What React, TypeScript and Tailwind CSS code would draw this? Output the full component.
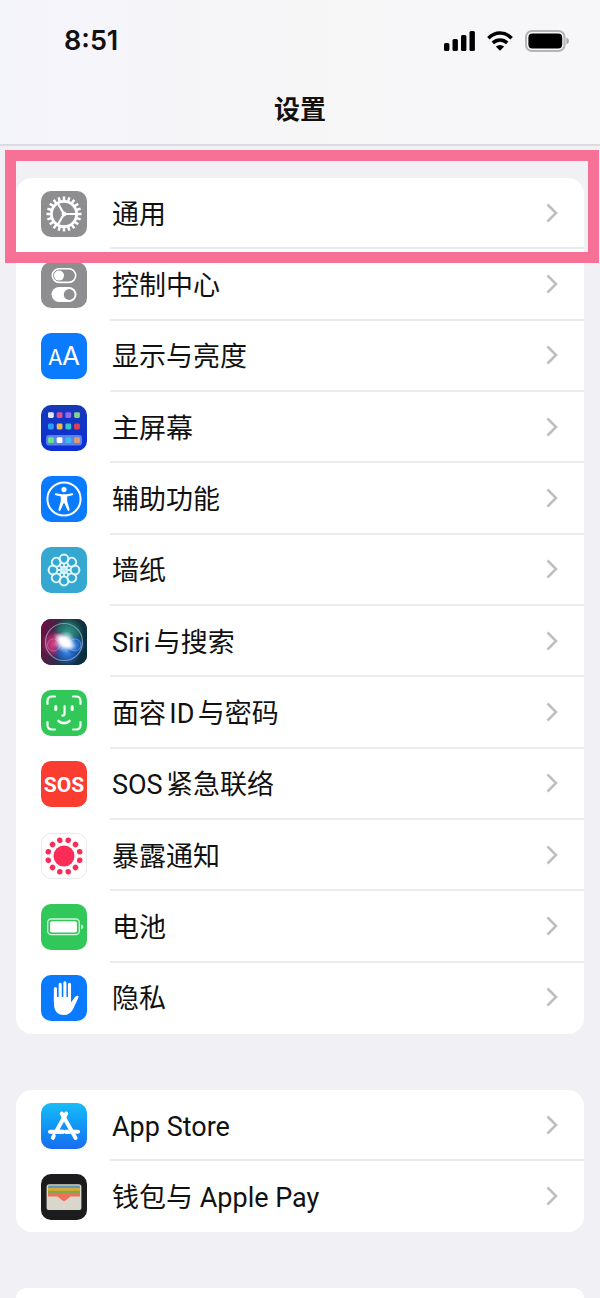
import React from 'react';

interface SettingItem {
  label: string;
  icon: React.ReactNode;
  highlighted?: boolean;
}

const spin = (count: number, offset = 0) =>
  Array.from({ length: count }, (_, i) => offset + (i * 360) / count);

const Tile = ({ className, children }: { className: string; children: React.ReactNode }) => (
  <span className={`block size-[46px] shrink-0 overflow-hidden rounded-[10px] ${className}`}>
    <svg viewBox="0 0 46 46" className="size-full" fill="none" aria-hidden="true">
      {children}
    </svg>
  </span>
);

const GearIcon = () => (
  <Tile className="bg-[#8e8e90]">
    <g stroke="#fff">
      <circle cx="23" cy="23" r="12.6" strokeWidth="2.8" />
      {spin(20).map((a) => (
        <path key={a} d="M36 23H40.5" strokeWidth="2.5" transform={`rotate(${a} 23 23)`} />
      ))}
      {spin(3).map((a) => (
        <path key={a} d="M23 23H36" strokeWidth="2.2" transform={`rotate(${a} 23 23)`} />
      ))}
    </g>
    <circle cx="23" cy="23" r="2.4" fill="#fff" />
  </Tile>
);

const ControlIcon = () => (
  <Tile className="bg-[#8e8e90]">
    <rect x="11.3" y="6.8" width="23.4" height="13.6" rx="6.8" stroke="#fff" strokeWidth="1.6" />
    <circle cx="18" cy="13.6" r="5" fill="#fff" />
    <rect x="10.5" y="25" width="25" height="15" rx="7.5" fill="#fff" />
    <circle cx="28.2" cy="32.5" r="5.4" fill="#8e8e90" />
  </Tile>
);

const DisplayIcon = () => (
  <Tile className="bg-[#0a7aff]">
    <g fill="#fff" className="font-['Inter']">
      <text x="7" y="32" fontSize="21">A</text>
      <text x="21" y="32" fontSize="26">A</text>
    </g>
  </Tile>
);

const homeColors = [
  ['#e3e6fa', '#e0508c', '#9268f0', '#86cf8c'],
  ['#2f9df5', '#f2b84a', '#3cc3c4', '#dd3f52'],
  ['#6be08c', '#ffffff', '#36bdf2', '#e09a72'],
];

const HomeIcon = () => (
  <Tile className="bg-linear-to-b from-[#1638b8] to-[#0a2fd8]">
    <rect x="5" y="30" width="36" height="10.5" rx="3" fill="#5b82ea" />
    {homeColors.map((row, r) =>
      row.map((color, c) => (
        <rect key={`${r}${c}`} x={7 + c * 8.7} y={[7.2, 18.6, 32.3][r]} width="5.8" height="5.8" rx="1.4" fill={color} />
      ))
    )}
  </Tile>
);

const AccessibilityIcon = () => (
  <Tile className="bg-[#0a7aff]">
    <circle cx="23" cy="23" r="16.6" stroke="#fff" strokeWidth="2" />
    <circle cx="23" cy="13.6" r="2.6" fill="#fff" />
    <path
      d="M14.8 17.2 21 18.2Q23 18.5 25 18.2L31.2 17.2Q32.4 17.4 32.2 18.4 32.1 19 31.2 19.3L26.2 20.6V25.2L28.6 33.6Q28.6 35 27.6 35 26.8 35 26.4 34L23.4 27.2H22.6L19.6 34Q19.2 35 18.4 35 17.4 35 17.4 33.6L19.8 25.2V20.6L14.8 19.3Q13.9 19 13.8 18.4 13.6 17.4 14.8 17.2Z"
      fill="#fff"
    />
  </Tile>
);

const WallpaperIcon = () => (
  <Tile className="bg-[#35a8d2]">
    <g stroke="#e4f8ff">
      {spin(8).map((a) => (
        <g key={a} transform={`rotate(${a} 23 23)`}>
          <circle cx="23" cy="12" r="4.4" strokeWidth="2" />
          <path d="M23 19.8V16.5" strokeWidth="1.8" />
        </g>
      ))}
      <circle cx="23" cy="23" r="3.2" fill="#bfeaf8" strokeWidth="1.4" />
    </g>
  </Tile>
);

const SiriIcon = () => (
  <Tile className="bg-[#1b1430]">
    <defs>
      <linearGradient id="siriBack" x1="0" y1="0.4" x2="1" y2="0.6">
        <stop offset="0" stopColor="#6a1244" />
        <stop offset="0.5" stopColor="#25304a" />
        <stop offset="1" stopColor="#06303c" />
      </linearGradient>
      <radialGradient id="siriPink">
        <stop offset="0" stopColor="#e04a90" />
        <stop offset="0.6" stopColor="#b02a6c" stopOpacity="0.8" />
        <stop offset="1" stopColor="#a01860" stopOpacity="0" />
      </radialGradient>
      <radialGradient id="siriGreen">
        <stop offset="0" stopColor="#3a9c90" />
        <stop offset="0.6" stopColor="#1f7c70" stopOpacity="0.8" />
        <stop offset="1" stopColor="#0f6a58" stopOpacity="0" />
      </radialGradient>
      <radialGradient id="siriBlue">
        <stop offset="0" stopColor="#3b8fee" />
        <stop offset="0.6" stopColor="#205fc0" stopOpacity="0.8" />
        <stop offset="1" stopColor="#1550b8" stopOpacity="0" />
      </radialGradient>
      <radialGradient id="siriGlow">
        <stop offset="0" stopColor="#fff" />
        <stop offset="0.4" stopColor="#fff" stopOpacity="0.85" />
        <stop offset="1" stopColor="#d8e8ff" stopOpacity="0" />
      </radialGradient>
    </defs>
    <rect width="46" height="46" fill="url(#siriBack)" />
    <circle cx="27" cy="14" r="16" fill="url(#siriGreen)" />
    <circle cx="14" cy="25" r="14" fill="url(#siriPink)" />
    <circle cx="26" cy="33" r="14" fill="url(#siriBlue)" />
    <circle cx="34" cy="26" r="10" fill="url(#siriBlue)" />
    <circle cx="12.5" cy="26" r="6" stroke="#f08ab8" strokeOpacity="0.5" />
    <circle cx="34" cy="26" r="6" stroke="#8fc8ff" strokeOpacity="0.5" />
    <circle cx="24" cy="23" r="11" fill="url(#siriGlow)" />
    <ellipse cx="24" cy="23" rx="14" ry="6" fill="url(#siriGlow)" transform="rotate(35 24 23)" />
    <circle cx="23" cy="23" r="18.5" stroke="#a3b4c8" strokeOpacity="0.7" strokeWidth="1.2" />
  </Tile>
);

const FaceIdIcon = () => (
  <Tile className="bg-[#32c759]">
    <g stroke="#f2fff4" strokeWidth="2.2" strokeLinecap="round">
      <path d="M6.5 14V11Q6.5 6.5 11 6.5H14M32 6.5H35Q39.5 6.5 39.5 11V14M39.5 32V35Q39.5 39.5 35 39.5H32M14 39.5H11Q6.5 39.5 6.5 35V32" />
      <path d="M14.8 16.5V19.5M31.2 16.5V19.5" strokeWidth="3" />
      <path d="M23.6 16V23.5Q23.6 25.6 21.3 25.6" />
      <path d="M17.5 31Q23 35.4 28.5 31" strokeWidth="2.6" />
    </g>
  </Tile>
);

const SosIcon = () => (
  <Tile className="bg-[#fb3c30]">
    <text x="23" y="31" textAnchor="middle" fontSize="21" fontWeight="700" fill="#fff" className="font-['Roboto']">
      SOS
    </text>
  </Tile>
);

const ExposureIcon = () => (
  <Tile className="border border-[#e9e9ec] bg-white">
    <g fill="#fb2c57">
      <circle cx="23" cy="23" r="11" />
      {spin(12, 15).map((a) => (
        <circle key={a} cx="40" cy="23" r="2.9" transform={`rotate(${a} 23 23)`} />
      ))}
    </g>
  </Tile>
);

const BatteryIcon = () => (
  <Tile className="bg-[#32c759]">
    <rect x="6.7" y="15" width="31.6" height="15.6" rx="3.6" stroke="#d5f6dc" strokeWidth="1.3" />
    <rect x="9" y="17.2" width="27" height="11.2" rx="2" fill="#fff" />
    <path d="M40 20.4Q42.4 21 42.4 22.8 42.4 24.6 40 25.2Z" fill="#d5f6dc" />
  </Tile>
);

const PrivacyIcon = () => (
  <Tile className="bg-[#0a7aff]">
    <path d="M14.4 13.5V26M19.2 9.2V24M23.9 7.9V24M28.5 9.4V25" stroke="#fff" strokeWidth="3.1" strokeLinecap="round" />
    <path
      d="M12.9 22H30V27.6L33.6 22.4Q35.2 20.2 37 20.8 38 21.3 37.2 23L32.4 33.4Q29.4 40 22.8 40 12.9 40 12.9 28Z"
      fill="#fff"
    />
  </Tile>
);

const AppStoreIcon = () => (
  <Tile className="bg-linear-to-b from-[#1bbcf8] to-[#1a6cf0]">
    <g stroke="#fff" strokeWidth="4" strokeLinecap="round">
      <path d="M9 28.8H22M32 28.8H37" />
      <path d="M25.2 10.6 15 28.8H22M12.8 32.8 11.8 34.8" />
      <path d="M20.8 10.6 34.6 35" />
    </g>
    <path d="M24 26.8H27.6L30 31H24Z" fill="#fff" />
  </Tile>
);

const WalletIcon = () => (
  <Tile className="bg-[#1c1c1e]">
    <rect x="5.6" y="10.2" width="34.8" height="25.8" rx="2.6" fill="#d9d7cb" />
    <rect x="7" y="11.6" width="32" height="3" rx="1" fill="#5b9bc0" />
    <rect x="7" y="14" width="32" height="3.6" fill="#d9ab35" />
    <rect x="7" y="16.8" width="32" height="4" fill="#83a84c" />
    <path d="M7 20H39V22.6H29.5L24.6 26.4Q23 27.6 21.4 26.4L16.5 22.6H7Z" fill="#f0705a" />
  </Tile>
);

const mainItems: SettingItem[] = [
  { label: '通用', icon: <GearIcon />, highlighted: true },
  { label: '控制中心', icon: <ControlIcon /> },
  { label: '显示与亮度', icon: <DisplayIcon /> },
  { label: '主屏幕', icon: <HomeIcon /> },
  { label: '辅助功能', icon: <AccessibilityIcon /> },
  { label: '墙纸', icon: <WallpaperIcon /> },
  { label: 'Siri与搜索', icon: <SiriIcon /> },
  { label: '面容ID与密码', icon: <FaceIdIcon /> },
  { label: 'SOS紧急联络', icon: <SosIcon /> },
  { label: '暴露通知', icon: <ExposureIcon /> },
  { label: '电池', icon: <BatteryIcon /> },
  { label: '隐私', icon: <PrivacyIcon /> },
];

const storeItems: SettingItem[] = [
  { label: 'App Store', icon: <AppStoreIcon /> },
  { label: '钱包与 Apple Pay', icon: <WalletIcon /> },
];

const SettingRow = ({ item }: { item: SettingItem }) => (
  <li className="group relative flex min-h-[71px] flex-1">
    <a href="#" className="flex flex-1 items-center pl-[25px]">
      {item.icon}
      <span className="ml-[23px] flex flex-1 items-center justify-between self-stretch border-b-2 border-[#ebebed] pr-[26px] pl-[2px] group-last:border-transparent">
        <span className="pt-1 text-[27px] leading-8 text-[#111]">{item.label}</span>
        <svg width="12" height="20" viewBox="0 0 12 20" fill="none" aria-hidden="true">
          <path d="M1.5 1.5 10 10 1.5 18.5" stroke="#bfbfc2" strokeWidth="2.6" />
        </svg>
      </span>
    </a>
    {item.highlighted && (
      <span className="pointer-events-none absolute -top-7 -right-[15px] -bottom-[14px] -left-[11px] z-10 border-[11px] border-[#f77096]" />
    )}
  </li>
);

const StatusBar = () => (
  <div className="flex h-[82px] items-center justify-between pr-[31px] pl-16">
    <span className="font-['Inter'] text-[27px] leading-8 font-semibold text-[#111]">8:51</span>
    <div className="flex items-center gap-3">
      <svg width="31" height="20" viewBox="0 0 31 20" aria-hidden="true">
        <rect x="0" y="12" width="5.4" height="8" rx="1.5" />
        <rect x="8.5" y="8" width="5.4" height="12" rx="1.5" />
        <rect x="17" y="4" width="5.4" height="16" rx="1.5" />
        <rect x="25.5" y="0" width="5.4" height="20" rx="1.5" />
      </svg>
      <svg width="26" height="20" viewBox="0 0 26 20" fill="none" aria-hidden="true">
        <path d="M1.4 7.2Q6.5 2 13 2 19.5 2 24.6 7.2" stroke="#000" strokeWidth="3.6" />
        <path d="M5.8 11.9Q9 8.9 13 8.9 17 8.9 20.2 11.9" stroke="#000" strokeWidth="3.5" />
        <path d="M8.8 15.4Q13 12.4 17.2 15.4L13 19.8Z" fill="#000" />
      </svg>
      <svg width="44" height="22" viewBox="0 0 44 22" fill="none" aria-hidden="true">
        <rect x="1" y="1" width="38.5" height="20" rx="6" stroke="#b4b4b7" strokeWidth="2" />
        <rect x="3.4" y="3.4" width="33.8" height="15.2" rx="4" fill="#000" />
        <path d="M41.4 7.4Q44 8.4 44 11 44 13.6 41.4 14.6Z" fill="#a9a9ac" />
      </svg>
    </div>
  </div>
);

const App: React.FC = () => {
  return (
    <div className="flex min-h-screen flex-col bg-[#f0f0f5] font-['Roboto','Noto_Sans_CJK_SC',sans-serif] text-black [text-autospace:normal]">
      <header className="border-b-2 border-[#dcdce0] bg-linear-to-r from-[#f4f4fb] via-[#f6f6f7] to-[#f7f7fa]">
        <StatusBar />
        <h1 className="pt-3 pb-[18px] text-center text-[26px] leading-8 font-semibold text-[#111]">设置</h1>
      </header>

      <main className="flex flex-1 flex-col gap-14 px-4 pt-8">
        <ul className="flex min-h-[856px] flex-col rounded-2xl bg-white">
          {mainItems.map((item) => (
            <SettingRow key={item.label} item={item} />
          ))}
        </ul>
        <ul className="flex flex-col rounded-2xl bg-white">
          {storeItems.map((item) => (
            <SettingRow key={item.label} item={item} />
          ))}
        </ul>
        <div className="flex-1 rounded-t-2xl bg-white" />
      </main>
    </div>
  );
};

export default App;
